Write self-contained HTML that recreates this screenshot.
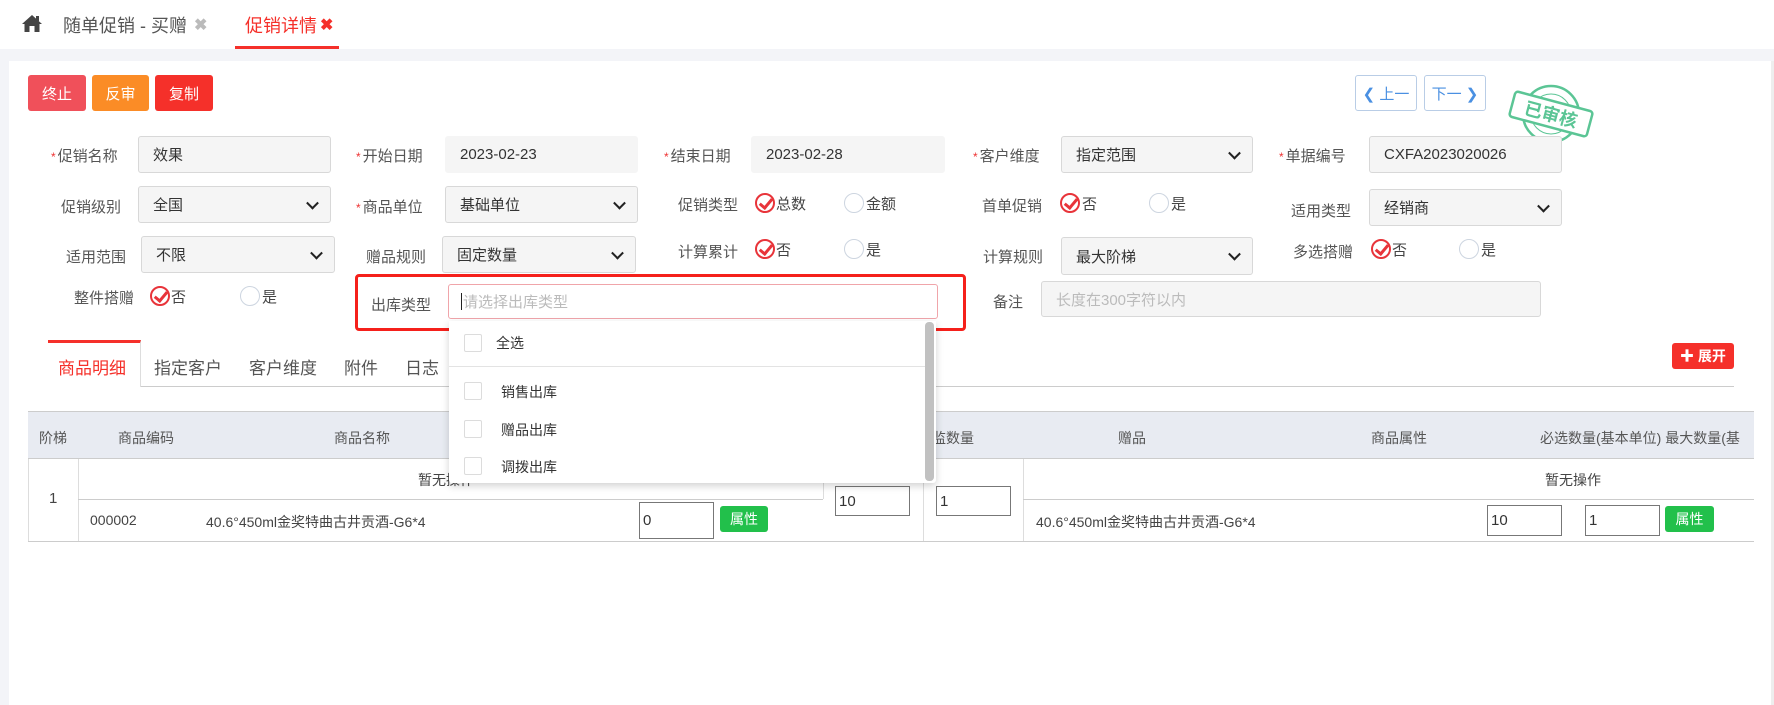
<!DOCTYPE html>
<html><head><meta charset="utf-8"><style>
*{box-sizing:border-box;margin:0;padding:0}
body{width:1774px;height:705px;background:#fff;font-family:"Liberation Sans","Noto Sans CJK SC",sans-serif;color:#333;position:relative;overflow:hidden;font-size:15px}
.a{position:absolute}
.lbl{position:absolute;font-size:15px;color:#555;white-space:nowrap}
.lbl i{color:#e33;font-style:normal;font-size:12px;margin-right:2px}
.inp{position:absolute;border:1px solid #d8d8d8;border-radius:3px;background:#f5f5f5;font-size:15px;color:#333;padding-left:14px;display:flex;align-items:center}
.sel::after{content:"";position:absolute;right:13px;top:50%;width:7px;height:7px;border-right:2px solid #222;border-bottom:2px solid #222;transform:translateY(-70%) rotate(45deg)}
.rad{position:absolute;width:20px;height:20px;border-radius:50%;border:1px solid #cdd5e0;background:#fff}
.rad.on{border:2px solid #e8343a}
.rad.on::after{content:"";position:absolute;left:5px;top:1px;width:5px;height:10px;border-right:3px solid #e8343a;border-bottom:3px solid #e8343a;transform:rotate(40deg)}
.rt{position:absolute;font-size:15px;color:#444}
.btn{position:absolute;color:#fff;font-size:15px;border-radius:3px;display:flex;align-items:center;justify-content:center}
.cb{position:absolute;width:18px;height:18px;border:1px solid #dcdcdc;border-radius:2px;background:#fff}
.th{position:absolute;font-size:14px;color:#555;top:428px;white-space:nowrap}
.ti{position:absolute;border:1px solid #777;background:#fff;font-size:15px;padding-left:3px;display:flex;align-items:center}
.vl{position:absolute;width:1px;background:#ddd}
.hl{position:absolute;height:1px;background:#ddd}
</style></head><body>
<svg class="a" style="left:21px;top:14px" width="22" height="19" viewBox="0 0 22 19"><path d="M11 1 L1 10 L3.5 10 L3.5 18 L8.5 18 L8.5 12 L13.5 12 L13.5 18 L18.5 18 L18.5 10 L21 10 Z" fill="#444"/><rect x="15" y="2" width="3" height="5" fill="#444"/></svg>
<div class="a" style="left:63px;top:12px;font-size:18px;color:#555">随单促销 - 买赠</div>
<div class="a" style="left:194px;top:15px;font-size:16px;color:#bbb;font-weight:bold">✖</div>
<div class="a" style="left:245px;top:12px;font-size:18px;color:#f5302a">促销详情</div>
<div class="a" style="left:320px;top:15px;font-size:16px;color:#f5302a;font-weight:bold">✖</div>
<div class="a" style="left:235px;top:46px;width:104px;height:3px;background:#f5302a"></div>
<div class="a" style="left:0;top:49px;width:1774px;height:12px;background:#f3f4f8"></div>
<div class="a" style="left:0;top:61px;width:9px;height:644px;background:#f3f4f8"></div>
<div class="a" style="left:1771px;top:61px;width:3px;height:644px;background:#eee"></div>

<div class="btn" style="left:28px;top:75px;width:58px;height:36px;background:#f0505a">终止</div>
<div class="btn" style="left:92px;top:75px;width:57px;height:36px;background:#fb8c26">反审</div>
<div class="btn" style="left:155px;top:75px;width:58px;height:36px;background:#f5302a">复制</div>
<div class="btn" style="left:1355px;top:75px;width:62px;height:36px;border:1px solid #b9cde6;color:#4a90e2;background:#fff">❮ 上一</div>
<div class="btn" style="left:1424px;top:75px;width:62px;height:36px;border:1px solid #b9cde6;color:#4a90e2;background:#fff">下一 ❯</div>
<svg class="a" style="left:1505px;top:80px" width="95" height="70" viewBox="0 0 95 70"><g stroke="#5bc595" fill="none"><circle cx="46" cy="34" r="28" stroke-width="2.5"/><circle cx="46" cy="34" r="20" stroke-width="1"/></g><g transform="rotate(15 46 34)"><rect x="6" y="21" width="80" height="26" rx="3" fill="#fff" stroke="#5bc595" stroke-width="2.5"/><text x="46" y="41" font-size="18" font-weight="bold" fill="#5bc595" text-anchor="middle" font-family="Noto Sans CJK SC,sans-serif">已审核</text></g></svg>

<div class="lbl" style="left:51px;top:145px"><i>*</i>促销名称</div>
<div class="inp" style="left:138px;top:136px;width:193px;height:37px">效果</div>
<div class="lbl" style="left:356px;top:145px"><i>*</i>开始日期</div>
<div class="inp" style="left:445px;top:136px;width:193px;height:37px;border-color:#f5f5f5">2023-02-23</div>
<div class="lbl" style="left:664px;top:145px"><i>*</i>结束日期</div>
<div class="inp" style="left:751px;top:136px;width:194px;height:37px;border-color:#f5f5f5">2023-02-28</div>
<div class="lbl" style="left:973px;top:145px"><i>*</i>客户维度</div>
<div class="inp sel" style="left:1061px;top:136px;width:192px;height:37px">指定范围</div>
<div class="lbl" style="left:1279px;top:145px"><i>*</i>单据编号</div>
<div class="inp" style="left:1369px;top:136px;width:193px;height:37px">CXFA2023020026</div>

<div class="lbl" style="left:61px;top:196px">促销级别</div>
<div class="inp sel" style="left:138px;top:186px;width:193px;height:37px">全国</div>
<div class="lbl" style="left:356px;top:196px"><i>*</i>商品单位</div>
<div class="inp sel" style="left:445px;top:186px;width:193px;height:37px">基础单位</div>
<div class="lbl" style="left:678px;top:194px">促销类型</div>
<div class="rad on" style="left:755px;top:193px"></div><div class="rt" style="left:776px;top:193px">总数</div>
<div class="rad" style="left:844px;top:193px"></div><div class="rt" style="left:866px;top:193px">金额</div>
<div class="lbl" style="left:982px;top:195px">首单促销</div>
<div class="rad on" style="left:1060px;top:193px"></div><div class="rt" style="left:1082px;top:193px">否</div>
<div class="rad" style="left:1149px;top:193px"></div><div class="rt" style="left:1171px;top:193px">是</div>
<div class="lbl" style="left:1291px;top:200px">适用类型</div>
<div class="inp sel" style="left:1369px;top:189px;width:193px;height:37px">经销商</div>

<div class="lbl" style="left:66px;top:246px">适用范围</div>
<div class="inp sel" style="left:141px;top:236px;width:194px;height:37px">不限</div>
<div class="lbl" style="left:366px;top:246px">赠品规则</div>
<div class="inp sel" style="left:442px;top:236px;width:194px;height:37px">固定数量</div>
<div class="lbl" style="left:678px;top:241px">计算累计</div>
<div class="rad on" style="left:755px;top:239px"></div><div class="rt" style="left:776px;top:239px">否</div>
<div class="rad" style="left:844px;top:239px"></div><div class="rt" style="left:866px;top:239px">是</div>
<div class="lbl" style="left:983px;top:246px">计算规则</div>
<div class="inp sel" style="left:1061px;top:237px;width:192px;height:38px">最大阶梯</div>
<div class="lbl" style="left:1293px;top:241px">多选搭赠</div>
<div class="rad on" style="left:1371px;top:239px"></div><div class="rt" style="left:1392px;top:239px">否</div>
<div class="rad" style="left:1459px;top:239px"></div><div class="rt" style="left:1481px;top:239px">是</div>

<div class="lbl" style="left:74px;top:287px">整件搭赠</div>
<div class="rad on" style="left:150px;top:286px"></div><div class="rt" style="left:171px;top:286px">否</div>
<div class="rad" style="left:240px;top:286px"></div><div class="rt" style="left:262px;top:286px">是</div>
<div class="a" style="left:355px;top:274px;width:611px;height:57px;border:3px solid #f5201b;border-radius:4px"></div>
<div class="lbl" style="left:371px;top:294px">出库类型</div>
<div class="a" style="left:448px;top:284px;width:490px;height:35px;border:1px solid #f0a5aa;border-radius:3px;background:#fff;font-size:15px;color:#bbb;padding-left:12px;display:flex;align-items:center"><span style="display:inline-block;width:1px;height:17px;background:#222;margin-right:1px"></span>请选择出库类型</div>
<div class="lbl" style="left:993px;top:291px">备注</div>
<div class="inp" style="left:1041px;top:281px;width:500px;height:36px;color:#bbb">长度在300字符以内</div>

<div class="a" style="left:48px;top:340px;width:93px;height:47px;border-top:3px solid #f5302a;border-right:1px solid #ddd;background:#fff"></div>
<div class="hl" style="left:141px;top:386px;width:1593px;background:#ccc"></div>
<div class="a" style="left:58px;top:354px;font-size:17px;color:#f5302a">商品明细</div>
<div class="a" style="left:154px;top:354px;font-size:17px;color:#555">指定客户</div>
<div class="a" style="left:249px;top:354px;font-size:17px;color:#555">客户维度</div>
<div class="a" style="left:344px;top:354px;font-size:17px;color:#555">附件</div>
<div class="a" style="left:405px;top:354px;font-size:17px;color:#555">日志</div>
<div class="btn" style="left:1672px;top:343px;width:62px;height:26px;background:#f5302a;font-size:14px;font-weight:bold">✚ 展开</div>

<div class="a" style="left:28px;top:411px;width:1726px;height:48px;background:#e8ebf2;border-top:1px solid #ccc;border-bottom:1px solid #ccc"></div>
<div class="th" style="left:39px">阶梯</div>
<div class="th" style="left:118px">商品编码</div>
<div class="th" style="left:334px">商品名称</div>
<div class="th" style="left:932px">监数量</div>
<div class="th" style="left:1118px">赠品</div>
<div class="th" style="left:1371px">商品属性</div>
<div class="th" style="left:1540px">必选数量(基本单位) 最大数量(基</div>
<div class="vl" style="left:28px;top:459px;height:82px"></div>
<div class="vl" style="left:78px;top:459px;height:82px"></div>
<div class="vl" style="left:923px;top:459px;height:82px"></div>
<div class="vl" style="left:1023px;top:459px;height:82px"></div>
<div class="vl" style="left:823px;top:459px;height:40px"></div>
<div class="hl" style="left:78px;top:499px;width:745px;background:#ccc"></div>
<div class="hl" style="left:1023px;top:499px;width:731px;background:#ccc"></div>
<div class="hl" style="left:28px;top:541px;width:1726px;background:#ccc"></div>
<div class="a" style="left:418px;top:470px;font-size:14px;color:#444">暂无操作</div>
<div class="a" style="left:1545px;top:470px;font-size:14px;color:#444">暂无操作</div>
<div class="a" style="left:49px;top:490px;font-size:15px;color:#444">1</div>
<div class="a" style="left:90px;top:512px;font-size:14px;color:#444">000002</div>
<div class="a" style="left:206px;top:512px;font-size:14px;color:#444">40.6°450ml金奖特曲古井贡酒-G6*4</div>
<div class="ti" style="left:639px;top:502px;width:75px;height:37px">0</div>
<div class="btn" style="left:720px;top:506px;width:48px;height:26px;background:#22c04b;font-size:14px">属性</div>
<div class="ti" style="left:835px;top:486px;width:75px;height:30px">10</div>
<div class="ti" style="left:936px;top:486px;width:75px;height:30px">1</div>
<div class="a" style="left:1036px;top:512px;font-size:14px;color:#444">40.6°450ml金奖特曲古井贡酒-G6*4</div>
<div class="ti" style="left:1487px;top:505px;width:75px;height:31px">10</div>
<div class="ti" style="left:1585px;top:505px;width:75px;height:31px">1</div>
<div class="btn" style="left:1665px;top:506px;width:49px;height:26px;background:#22c04b;font-size:14px">属性</div>

<div class="a" style="left:449px;top:321px;width:487px;height:162px;background:#fff;box-shadow:0 3px 8px rgba(0,0,0,.18);border-radius:0 0 3px 3px">
<div class="a" style="left:476px;top:1px;width:9px;height:159px;background:#c1c1c1;border-radius:4px"></div>
<div class="cb" style="left:15px;top:13px"></div><div class="a" style="left:47px;top:12px;font-size:14px;color:#333">全选</div>
<div class="hl" style="left:0;top:45px;width:476px;background:#e3e3e3"></div>
<div class="cb" style="left:15px;top:61px"></div><div class="a" style="left:52px;top:61px;font-size:14px;color:#333">销售出库</div>
<div class="cb" style="left:15px;top:99px"></div><div class="a" style="left:52px;top:99px;font-size:14px;color:#333">赠品出库</div>
<div class="cb" style="left:15px;top:136px"></div><div class="a" style="left:52px;top:136px;font-size:14px;color:#333">调拨出库</div>
</div>
</body></html>
